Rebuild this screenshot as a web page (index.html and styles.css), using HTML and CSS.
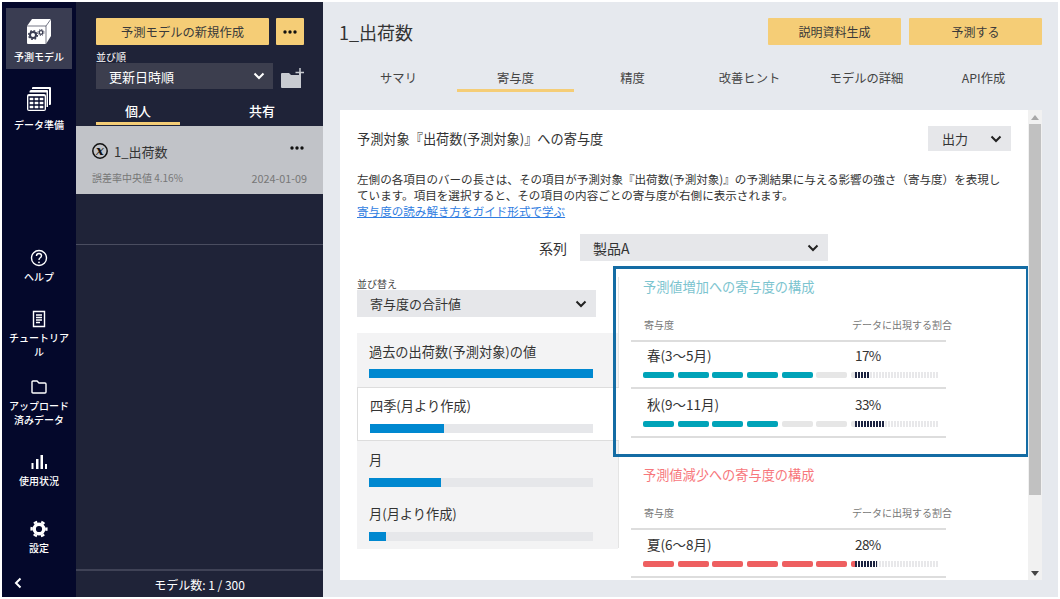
FILE: index.html
```html
<!DOCTYPE html>
<html lang="ja">
<head>
  <meta charset="UTF-8">
  <title>1_出荷数</title>
  <link rel="stylesheet" href="styles.css">
</head>
<body>
  <div class="app">
    <!-- 左端のナビ -->
    <nav class="rail">
      <a class="rail-item rail-model">
        <svg class="icon-big" viewBox="0 0 26 26">
          <path d="M1 8 L6 1 H25 V18 L20 26 H2 Q1 26 1 25 Z" fill="#fff"/>
          <path d="M1 8 H20 V26 M20 8 L25 1" fill="none" stroke="#3a3d52" stroke-width=".7"/>
          <circle cx="7" cy="17" r="3" fill="none" stroke="#3a3d52" stroke-width="2"/>
          <circle cx="7" cy="17" r="4.4" fill="none" stroke="#3a3d52" stroke-width="1.4" stroke-dasharray="1.7 1.75"/>
          <circle cx="15" cy="14.5" r="1.8" fill="none" stroke="#3a3d52" stroke-width="1.3"/>
          <circle cx="15" cy="14.5" r="3" fill="none" stroke="#3a3d52" stroke-width="1" stroke-dasharray="1.2 1.15"/>
        </svg>
        <span>予測モデル</span>
      </a>
      <a class="rail-item rail-data">
        <svg class="icon-big" viewBox="0 0 26 26">
          <path d="M6 4 V2 Q6 1 7 1 H24 Q25 1 25 2 V18 Q25 19 24 19 H23 V3 H6 Z" fill="#fff"/>
          <path d="M3.500 6.500 V5.500 Q3.500 4 5 4 H21 Q22 4 22 5 V21 H20.500 V6.500 Z" fill="#fff"/>
          <rect x="1" y="8" width="19" height="17" rx="2" fill="#fff"/>
          <path d="M3 11 H18 V23 H3 Z M3 15 H18 M3 19 H18 M8 11 V23 M13 11 V23" fill="none" stroke="#04082b" stroke-width="1.300"/>
        </svg>
        <span>データ準備</span>
      </a>
      <a class="rail-item rail-help">
        <svg class="icon" viewBox="0 0 18 18">
          <circle cx="9" cy="9" r="7.500" fill="none" stroke="#fff" stroke-width="1.400"/>
          <path d="M6.500 7 Q6.500 4.500 9 4.500 Q11.500 4.500 11.500 6.800 Q11.500 8 10 9 Q9 9.700 9 11" fill="none" stroke="#fff" stroke-width="1.400"/>
          <circle cx="9" cy="13.300" r=".9" fill="#fff"/>
        </svg>
        <span>ヘルプ</span>
      </a>
      <a class="rail-item rail-tutorial">
        <svg class="icon" viewBox="0 0 18 18">
          <path d="M3.500 1.500 H14.500 V16.500 H3.500 Z" fill="none" stroke="#fff" stroke-width="1.400"/>
          <path d="M6 5 H12 M6 7.500 H12 M6 10 H12 M6 12.500 H10" stroke="#fff" stroke-width="1.300"/>
        </svg>
        <span>チュートリア<br>ル</span>
      </a>
      <a class="rail-item rail-upload">
        <svg class="icon" viewBox="0 0 18 18">
          <path d="M2 4 Q2 3 3 3 H7 L9 5 H15 Q16 5 16 6 V14 Q16 15 15 15 H3 Q2 15 2 14 Z" fill="none" stroke="#fff" stroke-width="1.400"/>
        </svg>
        <span>アップロード<br>済みデータ</span>
      </a>
      <a class="rail-item rail-usage">
        <svg class="icon" viewBox="0 0 18 18">
          <path d="M1.500 10 H3.500 V16 H1.500 Z M6 6 H8.500 V16 H6 Z M10.500 2 H13 V16 H10.500 Z M15 11 H17 V16 H15 Z" fill="#fff"/>
        </svg>
        <span>使用状況</span>
      </a>
      <a class="rail-item rail-settings">
        <svg class="icon" viewBox="0 0 18 18">
          <circle cx="9" cy="9" r="4.800" fill="none" stroke="#fff" stroke-width="3.400"/>
          <circle cx="9" cy="9" r="7.400" fill="none" stroke="#fff" stroke-width="2.400" stroke-dasharray="3.600 4.150" stroke-dashoffset="1.800"/>
        </svg>
        <span>設定</span>
      </a>
      <svg class="rail-collapse" viewBox="0 0 10 12">
        <path d="M7.500 1.500 L3 6 L7.500 10.500" fill="none" stroke="#fff" stroke-width="2"/>
      </svg>
    </nav>

    <!-- モデル一覧 -->
    <aside class="panel">
      <div class="panel-head">
        <div class="panel-actions">
          <button class="btn btn-new">予測モデルの新規作成</button>
          <button class="btn btn-more">
            <svg class="dots" viewBox="0 0 14 4"><circle cx="2" cy="2" r="1.700"/><circle cx="7" cy="2" r="1.700"/><circle cx="12" cy="2" r="1.700"/></svg>
          </button>
        </div>
        <div class="small-label">並び順</div>
        <div class="panel-sort">
          <div class="select select-dark">
            <span>更新日時順</span>
            <svg class="chevron" viewBox="0 0 12 8"><path d="M1.500 1.500 L6 6 L10.500 1.500" fill="none" stroke="#fff" stroke-width="2"/></svg>
          </div>
          <svg class="folder-add" viewBox="0 0 24 22">
            <path d="M1 7 Q1 6 2 6 H9 L11 8 H19 V6 H21 V21 H2 Q1 21 1 20 Z" fill="#c8cbd1"/>
            <path d="M20 1 V10 M15.500 5.500 H24" stroke="#c8cbd1" stroke-width="1.500"/>
          </svg>
        </div>
        <div class="panel-tabs">
          <div class="panel-tab active">個人</div>
          <div class="panel-tab">共有</div>
        </div>
      </div>
      <div class="model-list">
        <div class="model-item">
          <div class="model-top">
            <svg class="model-icon" viewBox="0 0 16 16">
              <circle cx="8" cy="8" r="7.200" fill="none" stroke="#111" stroke-width="1.500"/>
              <text x="8" y="11.500" text-anchor="middle" class="model-x">x</text>
            </svg>
            <span class="model-name">1_出荷数</span>
            <svg class="dots" viewBox="0 0 14 4"><circle cx="2" cy="2" r="1.700"/><circle cx="7" cy="2" r="1.700"/><circle cx="12" cy="2" r="1.700"/></svg>
          </div>
          <div class="model-sub">
            <span>誤差率中央値 4.16%</span>
            <span class="model-date">2024-01-09</span>
          </div>
        </div>
      </div>
      <div class="panel-space"></div>
      <div class="panel-foot">モデル数: 1 / 300</div>
    </aside>

    <main class="main">
      <header class="main-head">
        <h1>1_出荷数</h1>
        <div class="main-actions">
          <button class="btn btn-wide">説明資料生成</button>
          <button class="btn btn-wide">予測する</button>
        </div>
      </header>
      <div class="tabs">
        <div class="tab">サマリ</div>
        <div class="tab active">寄与度</div>
        <div class="tab">精度</div>
        <div class="tab">改善ヒント</div>
        <div class="tab">モデルの詳細</div>
        <div class="tab">API作成</div>
      </div>

      <section class="card">
        <div class="card-body">
          <div class="card-head">
            <h2>予測対象『出荷数(予測対象)』への寄与度</h2>
            <div class="select select-output">
              <span>出力</span>
              <svg class="chevron" viewBox="0 0 12 8"><path d="M1.500 1.500 L6 6 L10.500 1.500" fill="none" stroke="#222" stroke-width="2"/></svg>
            </div>
          </div>
          <p class="desc">左側の各項目のバーの長さは、その項目が予測対象『出荷数(予測対象)』の予測結果に与える影響の強さ（寄与度）を表現し<br>ています。項目を選択すると、その項目の内容ごとの寄与度が右側に表示されます。<br><a class="guide">寄与度の読み解き方をガイド形式で学ぶ</a></p>
          <div class="series">
            <span>系列</span>
            <div class="select select-series">
              <span>製品A</span>
              <svg class="chevron" viewBox="0 0 12 8"><path d="M1.500 1.500 L6 6 L10.500 1.500" fill="none" stroke="#222" stroke-width="2"/></svg>
            </div>
          </div>

          <div class="columns">
            <div class="col-left">
              <div class="small-label">並び替え</div>
              <div class="select select-sort">
                <span>寄与度の合計値</span>
                <svg class="chevron" viewBox="0 0 12 8"><path d="M1.500 1.500 L6 6 L10.500 1.500" fill="none" stroke="#222" stroke-width="2"/></svg>
              </div>
              <div class="factors">
                <div class="factor">
                  <div class="factor-name">過去の出荷数(予測対象)の値</div>
                  <div class="factor-track"><div class="factor-fill" style="width: 100%"></div></div>
                </div>
                <div class="factor selected">
                  <div class="factor-name">四季(月より作成)</div>
                  <div class="factor-track"><div class="factor-fill" style="width: 33%"></div></div>
                </div>
                <div class="factor">
                  <div class="factor-name">月</div>
                  <div class="factor-track"><div class="factor-fill" style="width: 32%"></div></div>
                </div>
                <div class="factor">
                  <div class="factor-name">月(月より作成)</div>
                  <div class="factor-track"><div class="factor-fill" style="width: 7.500%"></div></div>
                </div>
              </div>
            </div>

            <div class="col-right">
              <h3 class="comp-title up">予測値増加への寄与度の構成</h3>
              <div class="comp-head"><span>寄与度</span><span>データに出現する割合</span></div>
              <div class="comp-row up">
                <div class="comp-name">春(3～5月)</div>
                <div class="comp-pct">17%</div>
                <div class="segs"><i class="on"></i><i class="on"></i><i class="on"></i><i class="on"></i><i class="on"></i><i></i></div>
                <div class="ratio"><i class="stub"></i><div class="ticks"><div class="ticks-fill" style="width: 18%"></div></div></div>
              </div>
              <div class="comp-row up">
                <div class="comp-name">秋(9～11月)</div>
                <div class="comp-pct">33%</div>
                <div class="segs"><i class="on"></i><i class="on"></i><i class="on"></i><i class="on"></i><i></i><i></i></div>
                <div class="ratio"><i class="stub"></i><div class="ticks"><div class="ticks-fill" style="width: 35%"></div></div></div>
              </div>

              <h3 class="comp-title down">予測値減少への寄与度の構成</h3>
              <div class="comp-head"><span>寄与度</span><span>データに出現する割合</span></div>
              <div class="comp-row down">
                <div class="comp-name">夏(6～8月)</div>
                <div class="comp-pct">28%</div>
                <div class="segs"><i class="on"></i><i class="on"></i><i class="on"></i><i class="on"></i><i class="on"></i><i class="on"></i></div>
                <div class="ratio"><i class="stub on"></i><div class="ticks"><div class="ticks-fill" style="width: 27%"></div></div></div>
              </div>
            </div>
          </div>
          <div class="callout"></div>
        </div>
        <div class="scroll">
          <svg class="scroll-arrow" viewBox="0 0 8 5"><path d="M4 0 L8 5 H0 Z" fill="#a8a8a8"/></svg>
          <div class="scroll-thumb"></div>
          <svg class="scroll-arrow down" viewBox="0 0 8 5"><path d="M0 0 H8 L4 5 Z" fill="#444"/></svg>
        </div>
      </section>
    </main>
  </div>
</body>
</html>
```

FILE: styles.css
```css
* {
  margin: 0;
  padding: 0;
  box-sizing: border-box;
}

body {
  background-color: white;
  font-family: "Noto Sans CJK JP", "Noto Sans", sans-serif;
  color: #333;
}

.app {
  display: flex;
  width: 1056px;
  height: 595px;
  margin: 2px;
  overflow: hidden;
}

/* rail */
.rail {
  width: 74px;
  flex: none;
  background-color: #04082b;
  padding: 6px 4px 0;
  display: flex;
  flex-direction: column;
  align-items: stretch;
}

.rail-item {
  display: flex;
  flex-direction: column;
  align-items: center;
  gap: 3px;
  color: #fff;
  font-size: 10px;
  font-weight: 500;
  line-height: 14px;
  text-align: center;
}

.icon { width: 18px; height: 18px; }
.icon-big { width: 26px; height: 26px; }

.rail-model {
  height: 61px;
  padding-top: 10px;
  gap: 6px;
  background-color: #3a3d52;
}

.rail-data { margin-top: 17px; gap: 6px; }
.rail-help { margin-top: 117px; }
.rail-tutorial { margin-top: 26px; }
.rail-upload { margin-top: 19px; }
.rail-usage { margin-top: 26px; }
.rail-settings { margin-top: 32px; }

.rail-collapse {
  width: 10px;
  height: 12px;
  margin: 22px 0 0 7px;
}

/* panel */
.panel {
  width: 247px;
  flex: none;
  background-color: #1f2338;
  color: #fff;
  display: flex;
  flex-direction: column;
}

.panel-head {
  padding: 16px 19px 0 20px;
}

.panel-actions {
  display: flex;
  justify-content: space-between;
}

.btn {
  height: 27px;
  border: none;
  border-radius: 1px;
  background-color: #f5cd76;
  color: #3a3a3a;
  font-family: inherit;
  font-size: 12px;
}

.btn-new {
  width: 173px;
  font-size: 12.300px;
}

.btn-more {
  width: 28px;
  display: flex;
  align-items: center;
  justify-content: center;
}

.dots {
  width: 14px;
  height: 4px;
  fill: #111;
}

.small-label {
  font-size: 10px;
  line-height: 13px;
  margin-top: 5px;
}

.panel-sort {
  display: flex;
  justify-content: space-between;
  align-items: flex-end;
}

.select {
  display: flex;
  align-items: center;
  justify-content: space-between;
  background-color: #e6e7ea;
  color: #333;
  font-size: 13px;
}

.select-dark {
  width: 177px;
  height: 26px;
  padding: 0 8px 0 13px;
  background-color: #3c3e4e;
  color: #fff;
}

.chevron {
  width: 12px;
  height: 8px;
}

.folder-add {
  width: 24px;
  height: 22px;
}

.panel-tabs {
  display: flex;
  justify-content: space-between;
  margin-top: 8px;
}

.panel-tab {
  width: 84px;
  height: 28px;
  line-height: 27px;
  text-align: center;
  font-size: 13px;
  font-weight: 500;
}

.panel-tab.active {
  border-bottom: 3px solid #f5cd76;
}

.model-list {
  height: 119px;
  margin-top: 1px;
  border-bottom: 1px solid #4a4d60;
}

.model-item {
  height: 68px;
  padding: 15px 16px 0;
  background-color: #c1c3c8;
  color: #333;
}

.model-top {
  display: flex;
  align-items: center;
  height: 20px;
}

.model-icon {
  width: 16px;
  height: 16px;
  margin-right: 6px;
}

.model-x {
  font-family: "DejaVu Serif", serif;
  font-style: italic;
  font-size: 13px;
  font-weight: bold;
  fill: #111;
}

.model-name {
  flex: 1;
  font-size: 13px;
}

.model-top .dots {
  margin: -6px 3px 0 0;
}

.model-sub {
  display: flex;
  justify-content: space-between;
  align-items: center;
  margin-top: 10px;
  font-size: 10px;
  line-height: 14px;
  color: #777;
}

.model-date { font-size: 10.800px; }

.panel-space { flex: 1; }

.panel-foot {
  height: 28px;
  border-top: 2px solid #3f4256;
  text-align: center;
  font-size: 12px;
  line-height: 27px;
}

/* main */
.main {
  flex: 1;
  min-width: 0;
  background-color: #e6e9ee;
  padding: 16px 16px 0;
  display: flex;
  flex-direction: column;
}

.main-head {
  display: flex;
  justify-content: space-between;
  align-items: center;
}

h1 {
  font-size: 18px;
  font-weight: 400;
  color: #333;
}

.main-actions {
  display: flex;
  gap: 8px;
}

.btn-wide { width: 133px; }

.tabs {
  display: flex;
  margin: 21px 0 0 1px;
}

.tab {
  width: 117px;
  height: 26px;
  text-align: center;
  font-size: 12.300px;
  line-height: 25px;
  color: #444;
}

.tab.active {
  border-bottom: 3px solid #f5cd76;
}

.card {
  height: 470px;
  margin: 18px 0 0 1px;
  display: flex;
}

.card-body {
  position: relative;
  flex: 1;
  min-width: 0;
  background-color: #fff;
  padding: 16px 17px 0;
  overflow: hidden;
}

.card-head {
  display: flex;
  justify-content: space-between;
  align-items: center;
}

h2 {
  font-size: 13.200px;
  font-weight: 400;
}

.select-output {
  width: 83px;
  height: 25px;
  padding: 0 9px 0 14px;
}

.desc {
  margin-top: 20px;
  font-size: 11.570px;
  line-height: 16px;
  white-space: nowrap;
}

.guide {
  color: #2f7de1;
  text-decoration: underline;
}

.series {
  display: flex;
  align-items: center;
  gap: 13px;
  margin: 15px 0 0 182px;
  font-size: 14px;
}

.select-series {
  width: 248px;
  height: 27px;
  padding: 0 9px 0 13px;
  font-size: 14px;
}

.columns {
  display: flex;
  margin-top: 16px;
}

.col-left {
  width: 261px;
  flex: none;
}

.col-left .small-label {
  margin-top: 1px;
  line-height: 12px;
  color: #444;
}

.select-sort {
  width: 239px;
  height: 27px;
  padding: 0 9px 0 13px;
}

.factors {
  margin-top: 16px;
}

.factor {
  height: 54px;
  padding: 9px 25px 0 12px;
  background-color: #f3f3f4;
}

.factor.selected {
  position: relative;
  margin-right: -1px;
  background-color: #fff;
  border: 1px solid #ddd;
  border-right: none;
  padding: 8px 26px 0 12px;
}

.factor-name {
  font-size: 13.200px;
  line-height: 20px;
}

.factor-track {
  height: 9px;
  margin-top: 8px;
  background-color: #e6e7ea;
}

.factor:first-child .factor-track {
  margin-top: 7px;
}

.factor-fill {
  height: 100%;
  background-color: #0088d0;
}

.col-right {
  flex: 1;
  min-width: 0;
  height: 271px;
  padding-left: 12px;
  border-left: 1px solid #e4e4e4;
}

.comp-title {
  font-size: 13.200px;
  font-weight: 400;
  line-height: 20px;
  padding-left: 12px;
}

.comp-title.up { color: #7cc4cf; }

.comp-title.down {
  color: #f7777c;
  margin-top: 27px;
}

.comp-head {
  display: grid;
  grid-template-columns: 208px 100px;
  width: 315px;
  height: 27px;
  margin-top: 18px;
  padding: 3px 0 0 13px;
  border-bottom: 2px solid #ddd;
  font-size: 10px;
  line-height: 14px;
  color: #777;
  white-space: nowrap;
}

.comp-row {
  display: grid;
  grid-template-columns: 208px 95px;
  row-gap: 7px;
  width: 315px;
  padding: 5px 0 9px 12px;
  border-bottom: 2px solid #ddd;
}

.comp-head + .comp-row { padding-top: 3px; }
.comp-head + .comp-row.down { padding-top: 4px; }

.comp-name,
.comp-pct {
  font-size: 13.500px;
  line-height: 20px;
}

.comp-name { padding-left: 4px; }

.comp-pct {
  padding-left: 4px;
  letter-spacing: -0.6px;
}

.segs {
  display: flex;
  gap: 3.670px;
}

.segs i {
  width: 31px;
  height: 6px;
  border-radius: 2px;
  background-color: #e6e6e6;
}

.up .segs .on { background-color: #00a3b8; }
.down .segs .on { background-color: #ee5f60; }

.ratio {
  display: flex;
  height: 6px;
}

.stub {
  width: 4px;
  border-radius: 2px 0 0 2px;
  background-color: #e6e6e6;
}

.stub.on { background-color: #ee5f60; }

.ticks {
  width: 83px;
  background: repeating-linear-gradient(90deg, #e8e8ea 0 2px, #fff 2px 3px);
}

.ticks-fill {
  height: 100%;
  background: repeating-linear-gradient(90deg, #1c2340 0 2px, #fff 2px 3px);
}

/* 注釈の青枠 */
.callout {
  position: absolute;
  left: 273px;
  top: 156px;
  width: 416px;
  height: 191px;
  border: 3px solid #146ca4;
}

.scroll {
  width: 14px;
  flex: none;
  background-color: #f1f1f1;
  display: flex;
  flex-direction: column;
  align-items: center;
}

.scroll-arrow {
  width: 8px;
  height: 5px;
  margin-top: 5px;
}

.scroll-arrow.down {
  margin-top: 76px;
}

.scroll-thumb {
  width: 12px;
  height: 371px;
  margin-top: 4px;
  background-color: #c1c1c1;
}
```
